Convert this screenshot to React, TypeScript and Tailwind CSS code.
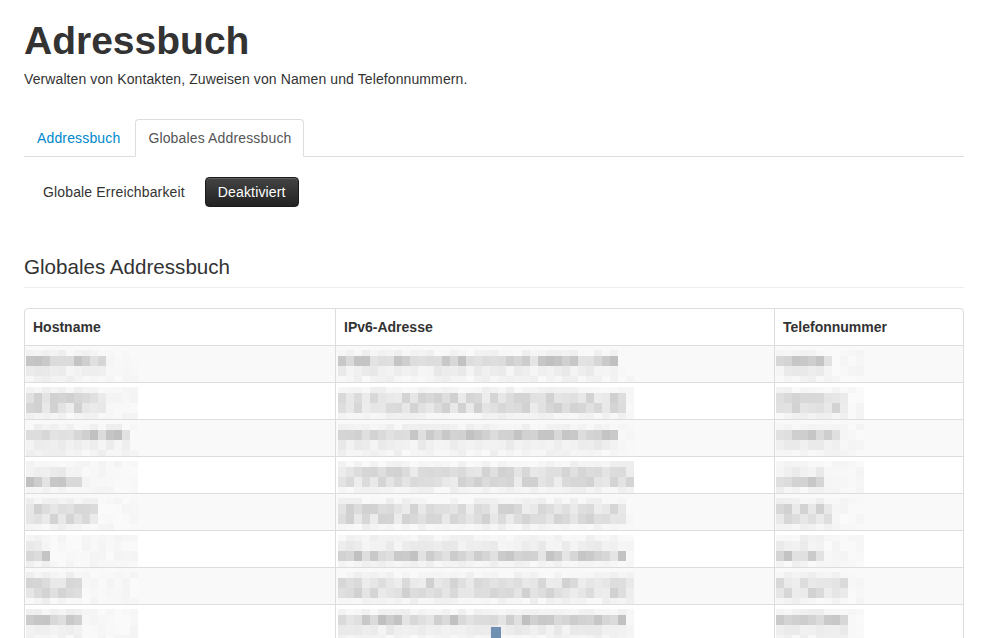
const rnd = (n: number) => {
  const x = Math.sin(n * 12.9898 + 78.233) * 43758.5453;
  return x - Math.floor(x);
};

type Cell = { w: number; c: number; kind: "one" | "two" | "low" };

const grey = (v: number) => `rgb(${v},${v},${v})`;

const Blob: React.FC<Cell & { seed: number }> = ({ w, c, kind, seed }) => {
  const cols = Math.ceil(w / 8);
  const bands: [string, number][] =
    kind === "one"
      ? [["pad", 6], ["dark", 10], ["light", 10], ["pad", 6]]
      : kind === "low"
      ? [["pad", 6], ["light", 10], ["dark", 10], ["pad", 6]]
      : [["pad", 6], ["mid", 10], ["mid", 10], ["pad", 6]];
  return (
    <div className="flex flex-col" style={{ width: w }}>
      {bands.map(([t, h], bi) => (
        <div key={bi} className="flex" style={{ height: h }}>
          {Array.from({ length: cols }).map((_, ci) => {
            const r = rnd(seed * 131 + bi * 37 + ci * 7);
            const inside = ci * 8 < c;
            let v = 244 + Math.floor(r * 7);
            if (inside && t === "dark") v = 192 + Math.floor(r * 38);
            if (inside && t === "mid") v = 208 + Math.floor(r * 30);
            if (inside && t === "light") v = 232 + Math.floor(r * 14);
            if (inside && t === "pad") v = 238 + Math.floor(r * 12);
            return <div key={ci} className="w-2 shrink-0" style={{ background: grey(v) }} />;
          })}
        </div>
      ))}
    </div>
  );
};

const rows: Cell[][] = [
  [{ w: 110, c: 78, kind: "one" }, { w: 294, c: 274, kind: "one" }, { w: 86, c: 52, kind: "one" }],
  [{ w: 110, c: 78, kind: "two" }, { w: 294, c: 284, kind: "two" }, { w: 86, c: 72, kind: "two" }],
  [{ w: 110, c: 100, kind: "one" }, { w: 294, c: 274, kind: "one" }, { w: 86, c: 64, kind: "one" }],
  [{ w: 110, c: 56, kind: "low" }, { w: 294, c: 294, kind: "two" }, { w: 86, c: 42, kind: "low" }],
  [{ w: 110, c: 66, kind: "two" }, { w: 294, c: 284, kind: "two" }, { w: 86, c: 52, kind: "two" }],
  [{ w: 110, c: 24, kind: "low" }, { w: 294, c: 284, kind: "low" }, { w: 86, c: 42, kind: "low" }],
  [{ w: 110, c: 56, kind: "two" }, { w: 294, c: 294, kind: "two" }, { w: 86, c: 72, kind: "two" }],
  [{ w: 110, c: 56, kind: "one" }, { w: 294, c: 284, kind: "one" }, { w: 86, c: 72, kind: "one" }],
];

export default function App() {
  return (
    <div className="relative min-h-screen overflow-hidden bg-white font-['Liberation_Sans',Arial,sans-serif] text-[14px] leading-5 tracking-[0.1px] text-[#333]">
      <div className="ml-6 w-[940px]">
        <h1 className="mt-[21px] text-[39px] font-bold leading-10 tracking-normal">Adressbuch</h1>
        <p className="mt-[8px]">Verwalten von Kontakten, Zuweisen von Namen und Telefonnummern.</p>

        <ul className="mt-[30px] flex border-b border-[#ddd] tracking-[0.15px]">
          <li className="-mb-px mr-[2px]">
            <a className="block rounded-t-[4px] border border-transparent px-3 py-2 leading-5 text-[#0088cc]">Addressbuch</a>
          </li>
          <li className="-mb-px mr-[2px]">
            <a className="block rounded-t-[4px] border border-[#ddd] border-b-white bg-white px-3 py-2 leading-5 text-[#555]">
              Globales Addressbuch
            </a>
          </li>
        </ul>

        <div className="mt-5 flex items-center gap-5 pl-[19px] tracking-[0.15px]">
          <span>Globale Erreichbarkeit</span>
          <button className="rounded-[4px] border border-[#1a1a1a] bg-gradient-to-b from-[#444] to-[#222] px-[12px] py-1 leading-5 text-white shadow-[inset_0_1px_0_rgba(255,255,255,0.15)]">
            Deaktiviert
          </button>
        </div>

        <h3 className="mt-[45px] border-b border-[#eee] pb-[5px] text-[20.6px] leading-[30px] tracking-normal">Globales Addressbuch</h3>

        <div className="mt-5 overflow-hidden rounded-[4px] border border-[#ddd]">
          <div className="grid h-9 grid-cols-[310px_439px_1fr] font-bold tracking-normal">
            <div className="px-2 py-2">Hostname</div>
            <div className="border-l border-[#ddd] px-2 py-2">IPv6-Adresse</div>
            <div className="border-l border-[#ddd] px-2 py-2">Telefonnummer</div>
          </div>
          {rows.map((r, i) => (
            <div
              key={i}
              className={`grid h-[37px] grid-cols-[310px_439px_1fr] border-t border-[#ddd] ${i % 2 === 0 ? "bg-[#f9f9f9]" : "bg-white"}`}
            >
              <div className="pl-[1px] pt-1">
                <Blob {...r[0]} seed={i * 3 + 1} />
              </div>
              <div className="border-l border-[#ddd] pl-[2px] pt-1">
                <Blob {...r[1]} seed={i * 3 + 2} />
              </div>
              <div className="border-l border-[#ddd] pl-[1px] pt-1">
                <Blob {...r[2]} seed={i * 3 + 3} />
              </div>
            </div>
          ))}
        </div>
      </div>
      <div className="absolute left-[491px] top-[627px] h-[11px] w-[10px] bg-[#7090b2]" />
    </div>
  );
}
